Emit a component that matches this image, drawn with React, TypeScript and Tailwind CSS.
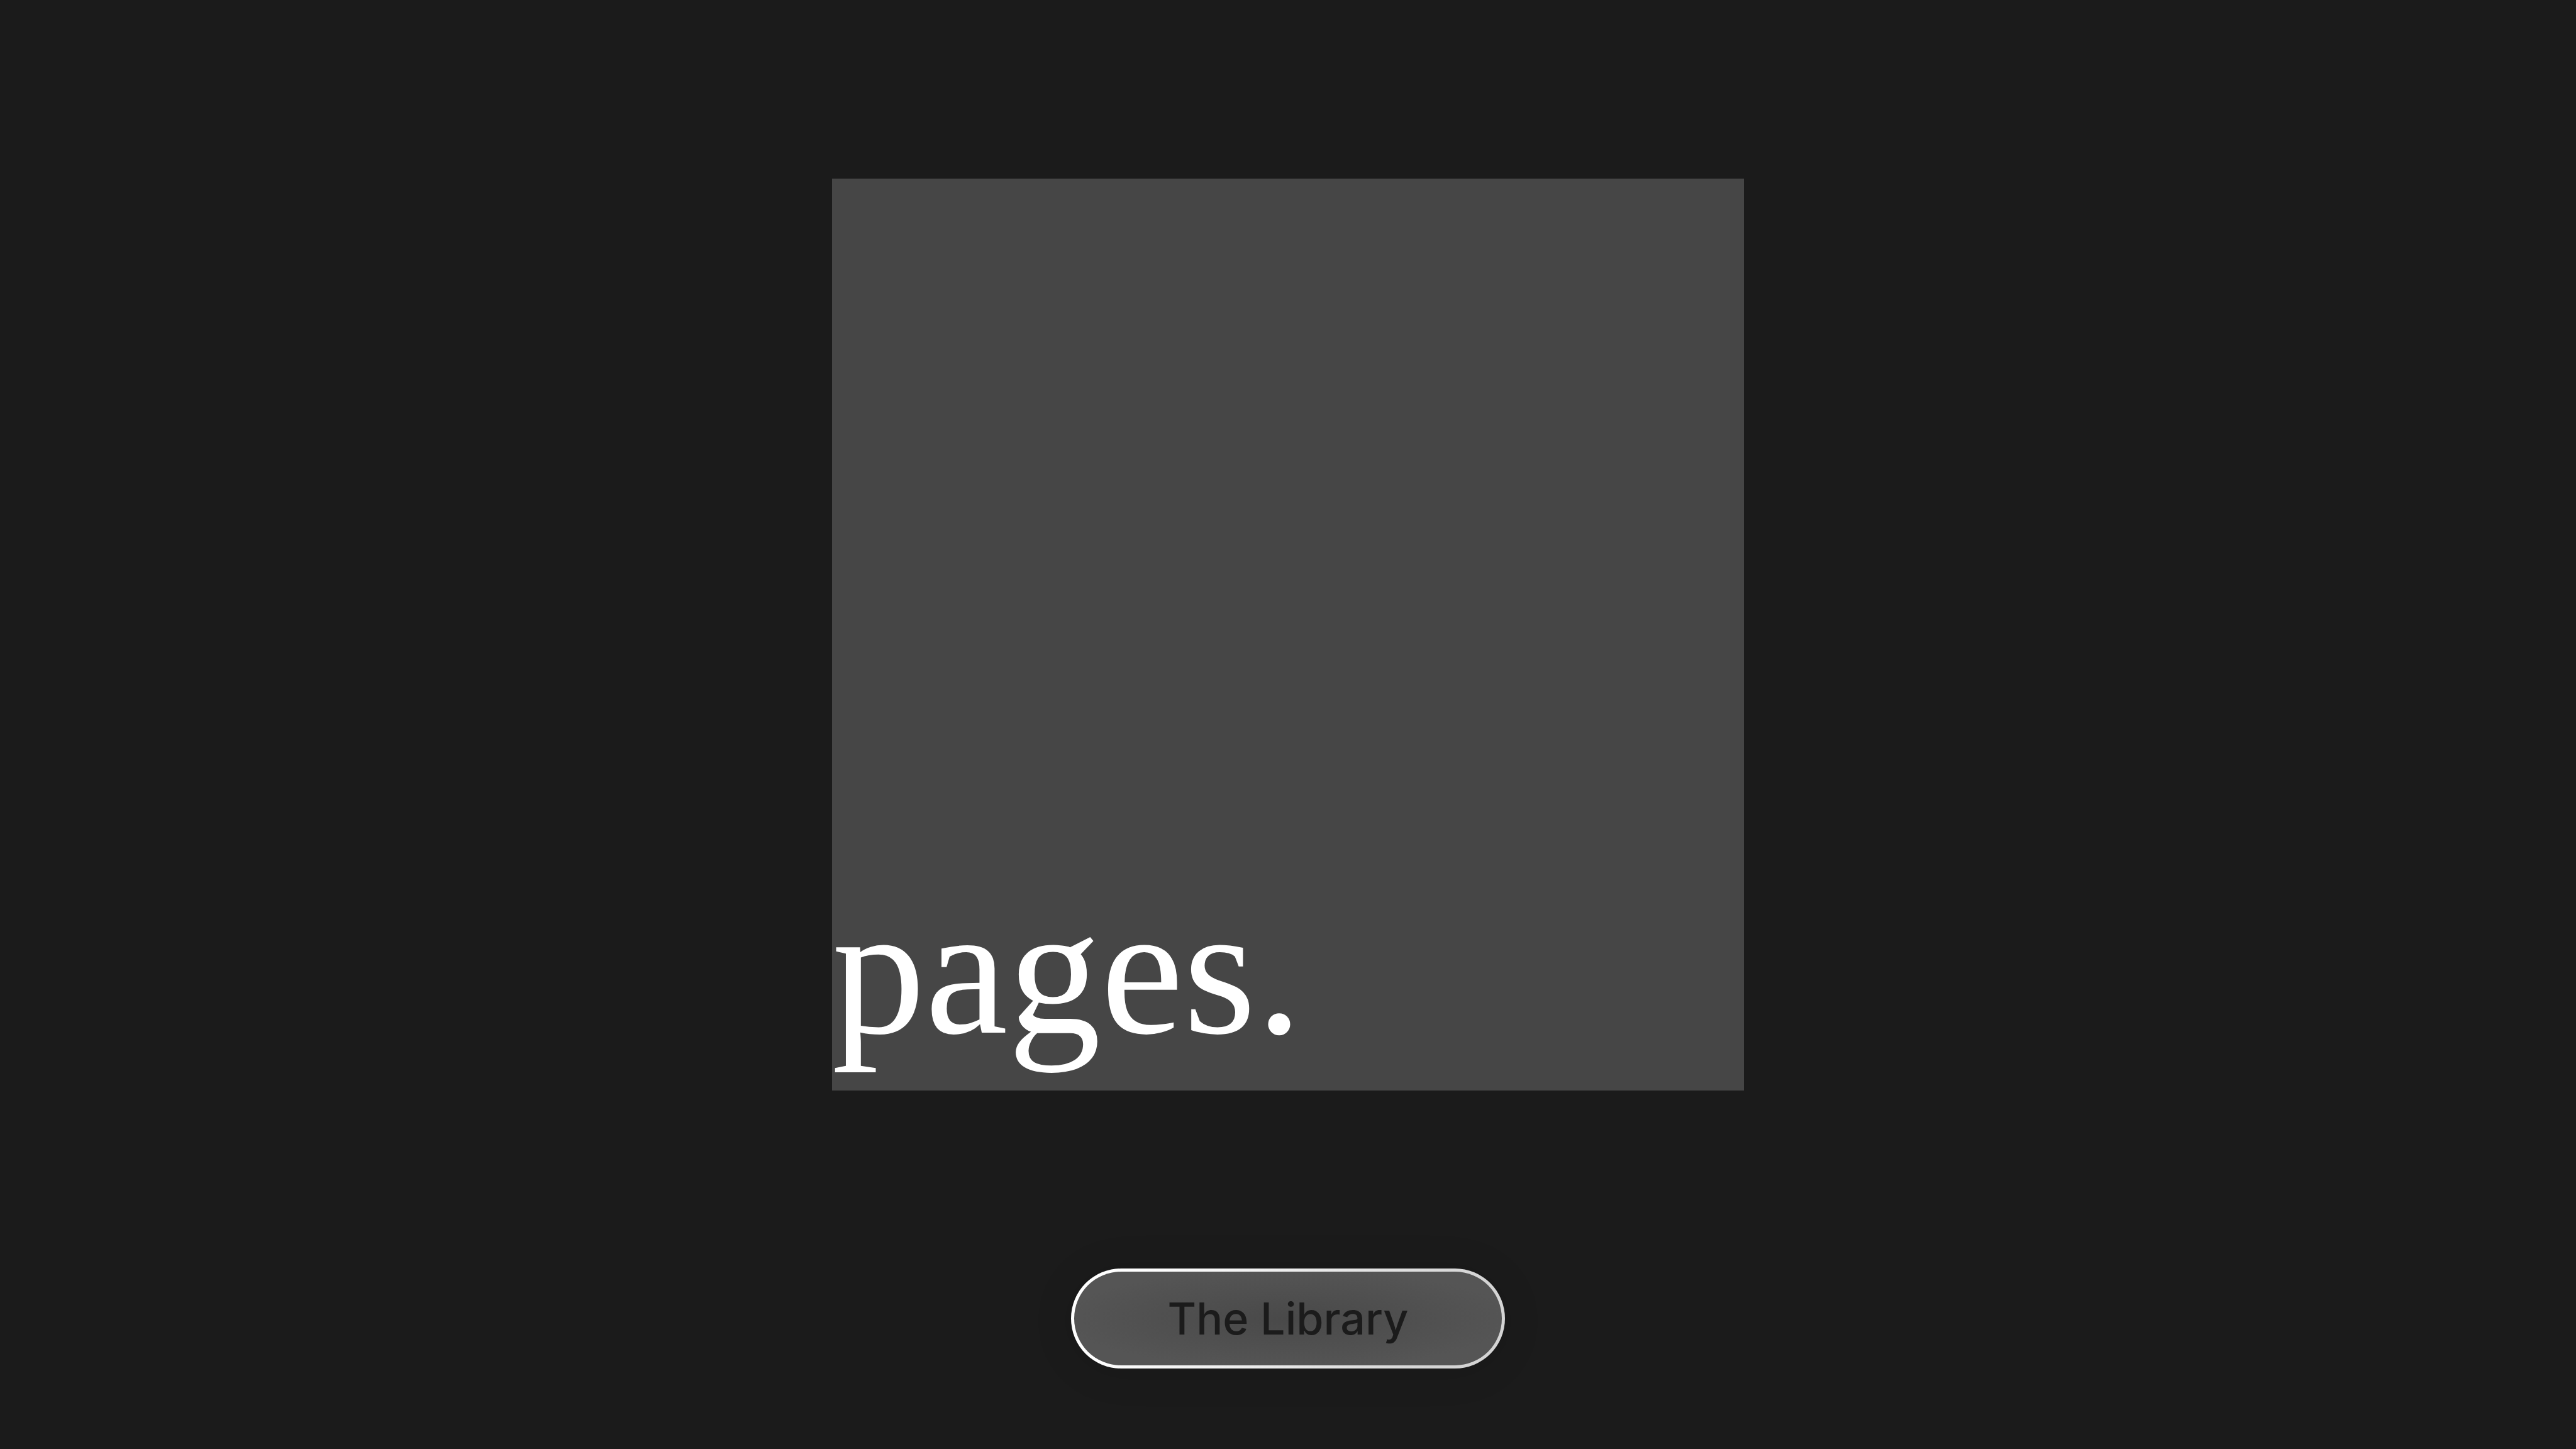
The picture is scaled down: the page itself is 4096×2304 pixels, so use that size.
export default function App() {
  return (
    <main className="flex min-h-screen flex-col items-center bg-[#1b1b1b] pb-32">
      <section className="flex w-full flex-1 items-center justify-center">
        <div className="flex aspect-square w-[1450px] max-w-full items-end bg-[#464646] pb-18">
          <h1 className="font-['Liberation_Serif',serif] text-[296px] leading-[240px] font-normal text-white">
            pages.
          </h1>
        </div>
      </section>
      <button
        type="button"
        className="min-w-[690px] rounded-full bg-linear-[120deg] from-white from-15% to-[#d4d4d4] to-85% p-[5px] shadow-[0_4px_64px_rgba(0,0,0,0.12)]"
      >
        <span className="block rounded-full bg-radial from-[#494949] to-[#555555] to-75% px-36 py-5 font-['Inter',sans-serif] text-[70px] leading-[109px] font-medium text-[#1b1b1b]">
          The Library
        </span>
      </button>
    </main>
  );
}
